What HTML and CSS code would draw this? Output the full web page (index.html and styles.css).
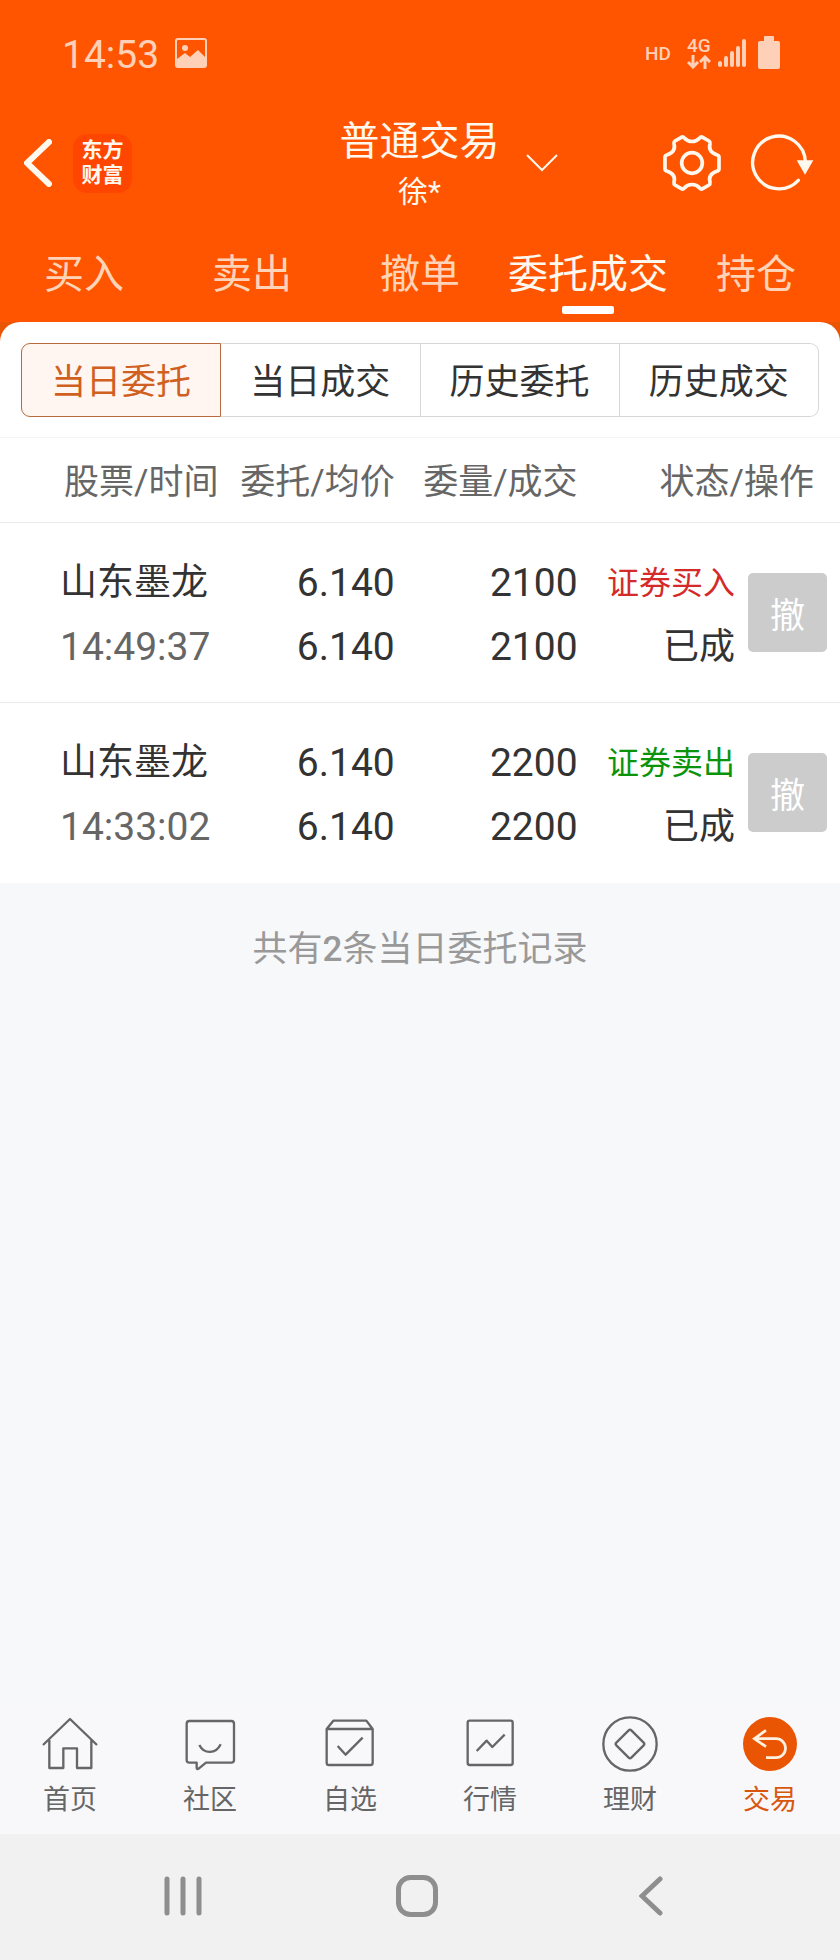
FILE: index.html
```html
<!DOCTYPE html>
<html lang="zh-CN">
<head>
    <meta charset="UTF-8">
    <meta name="viewport" content="width=device-width, initial-scale=1.0">
    <title>普通交易</title>
    <link rel="stylesheet" href="styles.css">
</head>
<body>
    <!-- 顶部 -->
    <header class="top">
        <div class="status-bar">
            <span class="clock">14:53</span>
            <svg class="icon-picture" viewBox="0 0 32 30" width="32" height="30">
                <rect x="1" y="1" width="30" height="28" rx="2" fill="none" stroke="currentColor" stroke-width="2"/>
                <circle cx="10" cy="10" r="3" fill="currentColor"/>
                <path d="M2 21l8-6 5 4 8-7 7 7v10H2z" fill="currentColor"/>
            </svg>
            <span class="hd">HD</span>
            <span class="network">
                4G
                <svg viewBox="0 0 24 14" width="24" height="14" fill="none" stroke="currentColor" stroke-width="3">
                    <path d="M6 0v12M1 7l5 5 5-5M18 14V2M13 7l5-5 5 5"/>
                </svg>
            </span>
            <svg class="icon-signal" viewBox="0 0 30 30" width="30" height="30" fill="none" stroke="currentColor" stroke-width="4" stroke-linecap="round">
                <path d="M3 25v2M9 20v7M15 15v12M21 10v17M27 3v24"/>
            </svg>
            <svg class="icon-battery" viewBox="0 0 22 34" width="22" height="34" fill="currentColor">
                <path d="M6 1q0-1 1-1h8q1 0 1 1v4h4q2 0 2 2v24q0 2-2 2H2q-2 0-2-2V7q0-2 2-2h4z"/>
            </svg>
        </div>

        <div class="title-bar">
            <div class="title-left">
                <button class="icon-btn" aria-label="返回">
                    <svg viewBox="0 0 28 48" width="28" height="48" fill="none" stroke="currentColor" stroke-width="6" stroke-linecap="round">
                        <path d="M25 3L3 24l22 21"/>
                    </svg>
                </button>
                <div class="logo">东方<br>财富</div>
            </div>
            <div class="title">
                <h1>普通交易</h1>
                <p>徐*</p>
            </div>
            <div class="title-right">
                <button class="icon-btn" aria-label="切换账户">
                    <svg viewBox="0 0 32 18" width="32" height="18" fill="none" stroke="currentColor" stroke-width="2">
                        <path d="M1 1l15 15L31 1"/>
                    </svg>
                </button>
                <button class="icon-btn push" aria-label="设置">
                    <svg viewBox="-90 -90 180 180" width="60" height="60" fill="none" stroke="currentColor" stroke-width="11" stroke-linejoin="round">
                        <path d="M81 18V-18Q81 -23 74 -25C57 -31 50 -43 54 -58Q55 -63 51 -66L32 -77Q27 -80 23 -75C11 -61 -11 -61 -23 -75Q-27 -80 -32 -77L-51 -66Q-55 -63 -54 -58C-50 -43 -57 -31 -74 -25Q-81 -23 -81 -18V18Q-81 23 -74 25C-57 31 -50 43 -54 58Q-55 63 -51 66L-32 77Q-27 80 -23 75C-11 61 11 61 23 75Q27 80 32 77L51 66Q55 63 54 58C50 43 57 31 74 25Q81 23 81 18Z"/>
                        <circle r="31"/>
                    </svg>
                </button>
                <button class="icon-btn" aria-label="刷新">
                    <svg viewBox="-90 -90 198 180" width="66" height="60" fill="none" stroke="currentColor" stroke-width="10" stroke-linecap="round">
                        <path d="M79 -3A79 79 0 1 0 58 52"/>
                        <path d="M53 -8h50L78 35z" fill="currentColor" stroke="none"/>
                    </svg>
                </button>
            </div>
        </div>

        <nav class="tabs">
            <a href="#">买入</a>
            <a href="#">卖出</a>
            <a href="#">撤单</a>
            <a href="#" class="active">委托成交</a>
            <a href="#">持仓</a>
        </nav>
    </header>

    <!-- 委托列表 -->
    <main class="content">
        <div class="sheet-wrap">
            <div class="sheet">
                <div class="segments">
                    <button class="active">当日委托</button>
                    <button>当日成交</button>
                    <button>历史委托</button>
                    <button>历史成交</button>
                </div>
                <table class="orders">
                    <colgroup>
                        <col class="col-stock">
                        <col class="col-price">
                        <col class="col-amount">
                        <col>
                        <col class="col-action">
                    </colgroup>
                    <thead>
                        <tr>
                            <th>股票/时间</th>
                            <th>委托/均价</th>
                            <th class="amount">委量/成交</th>
                            <th class="status" colspan="2">状态/操作</th>
                        </tr>
                    </thead>
                    <tbody>
                        <tr>
                            <td class="stock"><span>山东墨龙</span><span class="time">14:49:37</span></td>
                            <td><span>6.140</span><span>6.140</span></td>
                            <td class="amount"><span>2100</span><span>2100</span></td>
                            <td class="state"><span class="buy">证券买入</span><span>已成</span></td>
                            <td class="action"><button>撤</button></td>
                        </tr>
                        <tr>
                            <td class="stock"><span>山东墨龙</span><span class="time">14:33:02</span></td>
                            <td><span>6.140</span><span>6.140</span></td>
                            <td class="amount"><span>2200</span><span>2200</span></td>
                            <td class="state"><span class="sell">证券卖出</span><span>已成</span></td>
                            <td class="action"><button>撤</button></td>
                        </tr>
                    </tbody>
                </table>
            </div>
        </div>
        <p class="summary">共有<b>2</b>条当日委托记录</p>
    </main>

    <!-- 底部导航 -->
    <nav class="tab-bar">
        <a href="#">
            <svg viewBox="0 0 168 168"><path d="M3 87L84 9l81 78M22 72v84h42V97h41v59h43V72"/></svg>
            首页
        </a>
        <a href="#">
            <svg viewBox="0 0 168 168"><path d="M44 140H22q-8 0-8-8V23q0-8 8-8h126q8 0 8 8v109q0 8-8 8H72l-22 18q-6 3-6-3zM52 87c14 28 50 28 64-2"/></svg>
            社区
        </a>
        <a href="#">
            <svg viewBox="0 0 168 168"><path d="M14 39h138v101q0 7-7 7H21q-7 0-7-7zM14 39l20-25h99l19 25M47 90l24 26 51-51"/></svg>
            自选
        </a>
        <a href="#">
            <svg viewBox="0 0 168 168"><rect x="17" y="14" width="135" height="133" rx="6"/><path d="M44 105l30-31 17 19 37-37"/></svg>
            行情
        </a>
        <a href="#">
            <svg viewBox="0 0 168 168"><circle cx="84" cy="84" r="80"/><path d="M80 43q4-4 8 0l37 37q4 4 0 8l-37 37q-4 4-8 0L43 88q-4-4 0-8z"/></svg>
            理财
        </a>
        <a href="#" class="active">
            <svg viewBox="0 0 168 168"><circle class="disc" cx="84" cy="84" r="81"/><path class="arrow" d="M72 43L37 68l35 24M37 68h65a28 28 0 0 1 0 57H72"/></svg>
            交易
        </a>
    </nav>

    <!-- 系统按键 -->
    <div class="system-nav">
        <button class="icon-btn" aria-label="最近任务">
            <svg viewBox="0 0 40 42" width="40" height="42" fill="none" stroke="currentColor" stroke-width="5" stroke-linecap="round"><path d="M4 4v34M20 4v34M36 4v34"/></svg>
        </button>
        <button class="icon-btn" aria-label="主屏幕">
            <svg viewBox="0 0 84 84" width="42" height="42" fill="none" stroke="currentColor" stroke-width="10"><rect x="5" y="5" width="74" height="74" rx="24"/></svg>
        </button>
        <button class="icon-btn" aria-label="返回上一页">
            <svg viewBox="0 0 24 42" width="24" height="42" fill="none" stroke="currentColor" stroke-width="5" stroke-linecap="round"><path d="M21 4L3 21l18 17"/></svg>
        </button>
    </div>
</body>
</html>
```

FILE: styles.css
```css
* {
    box-sizing: border-box;
}

body {
    margin: 0;
    min-height: 100vh;
    display: flex;
    flex-direction: column;
    font-family: Roboto, "Noto Sans CJK SC", sans-serif;
    color: #333;
    background-color: #f7f8fa;
}

a {
    color: inherit;
    text-decoration: none;
}

button {
    margin: 0;
    padding: 0;
    border: none;
    background: none;
    color: inherit;
    font-family: inherit;
    cursor: pointer;
}

svg {
    display: block;
}

.icon-btn {
    display: flex;
}

/* 顶部 */
.top {
    background-color: #ff5500;
    color: #fff8ee;
}

.status-bar {
    height: 106px;
    padding: 0 60px 0 62px;
    display: flex;
    align-items: center;
    color: #ffd0b8;
}

.clock {
    padding-top: 3px;
    font-size: 39px;
    line-height: 48px;
}

.icon-picture {
    margin-left: 16px;
}

.hd {
    margin-left: auto;
    font-size: 19px;
    font-weight: 500;
}

.network {
    margin-left: 16px;
    font-size: 19px;
    line-height: 18px;
    font-weight: 500;
}

.icon-signal {
    margin-left: 6px;
}

.icon-battery {
    margin-left: 11px;
}

.title-bar {
    height: 114px;
    padding: 0 25px 0 24px;
    display: grid;
    grid-template-columns: 1fr auto 1fr;
    align-items: center;
    column-gap: 26px;
}

.title-left,
.title-right {
    display: flex;
    align-items: center;
}

.title-left {
    gap: 21px;
}

.title-right {
    gap: 27px;
}

.push {
    margin-left: auto;
}

.logo {
    width: 59px;
    height: 59px;
    padding-top: 4px;
    border-radius: 14px;
    background-color: #ff4600;
    text-align: center;
    font-size: 21px;
    line-height: 25px;
    font-weight: 700;
}

.title {
    padding-top: 4px;
    text-align: center;
}

.title h1 {
    margin: 0;
    font-size: 40px;
    line-height: 54px;
    font-weight: 400;
}

.title p {
    margin: 0;
    font-size: 30px;
    line-height: 46px;
}

.tabs {
    height: 102px;
    display: grid;
    grid-template-columns: repeat(5, 1fr);
    color: #ffd3b8;
}

.tabs a {
    display: flex;
    flex-direction: column;
    align-items: center;
    justify-content: flex-end;
    padding-bottom: 8px;
    font-size: 40px;
    line-height: 62px;
    white-space: nowrap;
}

.tabs a::after {
    content: "";
    width: 52px;
    height: 8px;
    border-radius: 2px;
}

.tabs .active {
    color: #fff8ee;
}

.tabs .active::after {
    background-color: #fff;
}

/* 委托列表 */
.content {
    flex: 1;
}

.sheet-wrap {
    background-color: #ea5504;
}

.sheet {
    border-radius: 20px 20px 0 0;
    background-color: #fff;
}

.segments {
    display: flex;
    padding: 21px 21px 20px;
}

.segments button {
    flex: 1;
    height: 74px;
    padding-bottom: 3px;
    border: 1px solid #d5d7db;
    border-left-width: 0;
    font-size: 35px;
}

.segments button:first-child {
    border-left-width: 1px;
    border-radius: 9px 0 0 9px;
}

.segments button:last-child {
    border-radius: 0 9px 9px 0;
}

.segments .active {
    border-color: #b8693e;
    background-color: #fff6f2;
    color: #d0601f;
}

.orders {
    width: 100%;
    table-layout: fixed;
    border-collapse: collapse;
    text-align: right;
}

.orders tr {
    border-top: 1px solid #ececec;
}

.orders thead tr {
    border-top-color: #f5f5f5;
}

.orders .col-stock {
    width: 26%;
}

.orders .col-price {
    width: 21%;
}

.orders .col-amount {
    width: 22%;
}

.orders .col-action {
    width: 105px;
}

.orders th {
    height: 85px;
    padding: 0 0 3px;
    color: #666;
    font-size: 35px;
    font-weight: 400;
    text-align: right;
    white-space: nowrap;
}

.orders td {
    height: 180px;
    padding: 4px 0 0;
    font-size: 39px;
    vertical-align: middle;
}

.orders td span {
    display: block;
    line-height: 64px;
    white-space: nowrap;
}

.orders .amount {
    padding-right: 2px;
}

.orders .status {
    padding-right: 26px;
}

.orders .stock {
    padding-left: 60px;
    text-align: left;
    font-size: 37px;
}

.orders .stock .time {
    color: #666;
    font-size: 39px;
}

.orders .state {
    font-size: 36px;
}

.orders .state .buy,
.orders .state .sell {
    font-size: 32px;
}

.orders .state .buy {
    color: #d42a2a;
}

.orders .state .sell {
    color: #0c930c;
}

.orders .action {
    padding: 0 13px;
}

.orders .action button {
    width: 79px;
    height: 79px;
    border-radius: 5px;
    background-color: #ccc;
    color: #fff;
    font-size: 35px;
    vertical-align: middle;
}

.summary {
    margin: 0;
    padding: 40px 0;
    text-align: center;
    color: #999;
    font-size: 35px;
    line-height: 54px;
}

.summary b {
    font-weight: 500;
}

/* 底部导航 */
.tab-bar {
    display: grid;
    grid-template-columns: repeat(6, 1fr);
    padding: 10px 0 14px;
    background-color: #f8f8fb;
    color: #666;
}

.tab-bar a {
    display: flex;
    flex-direction: column;
    align-items: center;
    gap: 8px;
    font-size: 27px;
    line-height: 40px;
}

.tab-bar svg {
    width: 56px;
    height: 56px;
    fill: none;
    stroke: currentColor;
    stroke-width: 7;
    stroke-linejoin: round;
}

.tab-bar .active {
    color: #d9560f;
}

.tab-bar .disc {
    fill: #ea5504;
    stroke: none;
}

.tab-bar .arrow {
    stroke: #fff0e0;
    stroke-width: 8;
    stroke-linejoin: miter;
}

/* 系统按键 */
.system-nav {
    height: 126px;
    display: grid;
    grid-template-columns: repeat(3, 28%);
    justify-content: center;
    align-items: center;
    justify-items: center;
    padding: 0 6px 2px 0;
    background-color: #f1f1f1;
    color: #8e8e8e;
}
```
